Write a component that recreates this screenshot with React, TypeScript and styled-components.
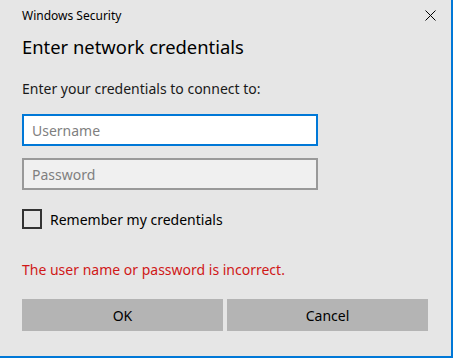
import { createGlobalStyle } from "styled-components";
import styled from "styled-components";

const GlobalStyle = createGlobalStyle`
  html, body {
    margin: 0;
    padding: 0;
    background: #e6e6e6;
  }
  * {
    box-sizing: border-box;
  }
`;

const Dialog = styled("div")`
  width: 453px;
  height: 358px;
  background: #e6e6e6;
  border-right: 2px solid #0078d7;
  border-bottom: 2px solid #0078d7;
  font-family: "Noto Sans", "Open Sans", sans-serif;
  color: #1a1a1a;
  display: flex;
  flex-direction: column;
  padding: 0 23px 0 22px;
`;

const TitleBar = styled("div")`
  display: flex;
  justify-content: space-between;
  align-items: center;
  height: 30px;
  font-size: 12px;
  color: #000;
`;

const CloseButton = styled("div")`
  width: 14px;
  height: 14px;
  display: flex;
  align-items: center;
  justify-content: center;
  margin-right: -9px;
`;

const Heading = styled("h1")`
  margin: 4px 0 0;
  font-size: 18.4px;
  font-weight: 400;
  line-height: 26px;
  color: #000;
`;

const Prompt = styled("p")`
  margin: 19px 0 0;
  font-size: 14px;
  line-height: 20px;
`;

const Field = styled("input")<{ $focused?: boolean }>`
  width: 296px;
  height: 32px;
  margin-top: ${(p) => (p.$focused ? "15px" : "12px")};
  padding: 0 8px;
  border: 2px solid ${(p) => (p.$focused ? "#0078d7" : "#999999")};
  background: ${(p) => (p.$focused ? "#ffffff" : "#f0f0f0")};
  font-family: inherit;
  font-size: 14px;
  color: #000;
  caret-color: #000;
  outline: none;
  &::placeholder {
    color: #7f7f7f;
  }
`;

const CheckRow = styled("label")`
  display: flex;
  align-items: center;
  gap: 8px;
  margin-top: 19px;
  font-size: 14px;
  color: #000;
`;

const CheckBox = styled("span")`
  width: 20px;
  height: 20px;
  border: 2px solid #333333;
`;

const ErrorText = styled("p")`
  margin: 31px 0 0;
  font-size: 14px;
  line-height: 20px;
  color: #d01818;
`;

const ButtonRow = styled("div")`
  display: grid;
  grid-template-columns: 1fr 1fr;
  gap: 4px;
  margin-top: 19px;
`;

const Button = styled("button")`
  height: 32px;
  border: none;
  background: #b4b4b4;
  font-family: inherit;
  font-size: 14px;
  color: #000;
`;

export default function App() {
  return (
    <>
      <GlobalStyle />
      <Dialog>
        <TitleBar>
          <span>Windows Security</span>
          <CloseButton>
            <svg width="11" height="11" viewBox="0 0 11 11">
              <path d="M0.5 0.5 L10.5 10.5 M10.5 0.5 L0.5 10.5" stroke="#000" strokeWidth="1" />
            </svg>
          </CloseButton>
        </TitleBar>
        <Heading>Enter network credentials</Heading>
        <Prompt>Enter your credentials to connect to:</Prompt>
        <Field $focused autoFocus placeholder="Username" />
        <Field placeholder="Password" type="password" />
        <CheckRow>
          <CheckBox />
          Remember my credentials
        </CheckRow>
        <ErrorText>The user name or password is incorrect.</ErrorText>
        <ButtonRow>
          <Button>OK</Button>
          <Button>Cancel</Button>
        </ButtonRow>
      </Dialog>
    </>
  );
}
